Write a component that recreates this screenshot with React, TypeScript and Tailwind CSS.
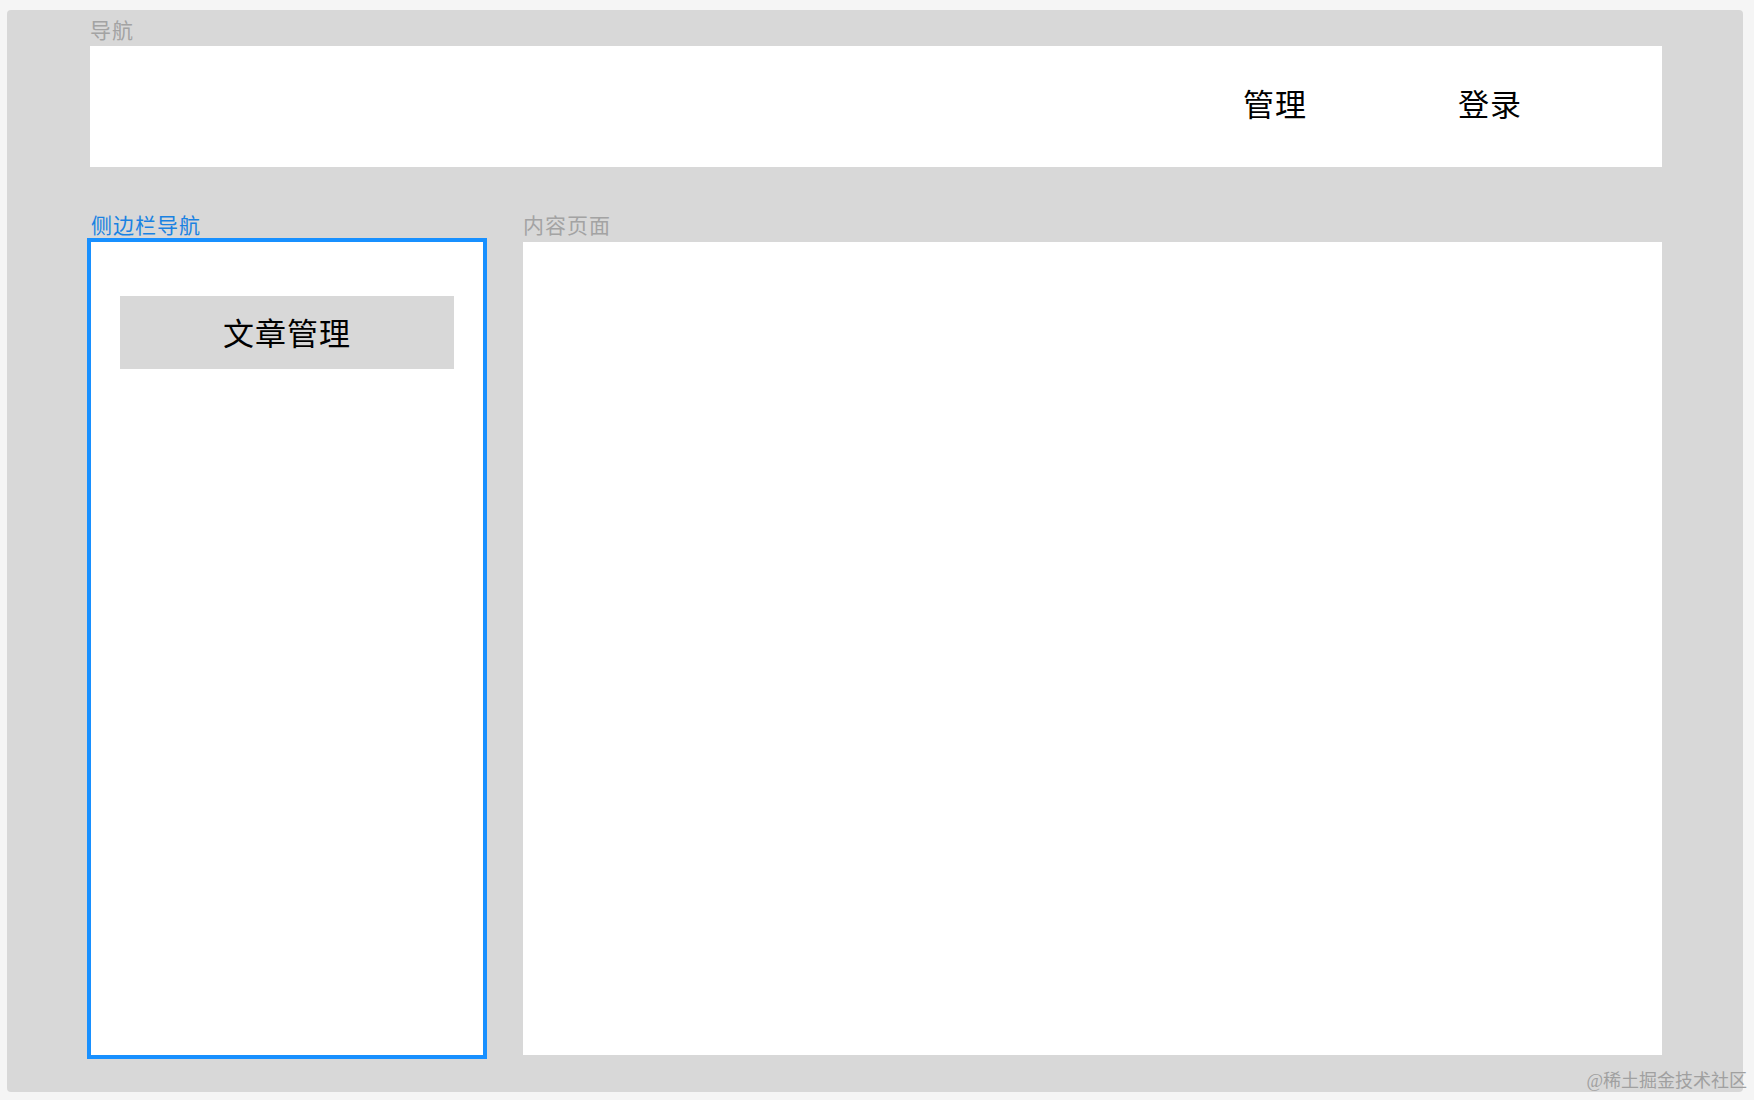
import React from "react";

export default function App() {
  return (
    <div
      className="relative w-[1754px] h-[1100px] bg-[#f5f5f5] pt-[10px] pl-[7px] pr-[11px] pb-[8px]"
      style={{ fontFamily: '"Noto Sans CJK SC", "Noto Sans", sans-serif' }}
    >
      <div className="w-full h-[1082px] bg-[#d8d8d8] rounded-[4px] pl-[83px] pr-[81px] pt-[6px] flex flex-col">
        <div className="h-[30px] leading-[26px] text-[21px] text-[#a3a3a3] tracking-[1px]">导航</div>
        <div className="h-[121px] bg-white flex items-center justify-end pr-[140px] pb-[6px] gap-[151px] text-[31px] text-black">
          <span className="tracking-[1px]">管理</span>
          <span className="tracking-[1px]">登录</span>
        </div>
        <div className="flex items-start">
          <div className="ml-[-3px] mt-[43px] flex flex-col">
            <div className="h-[28px] leading-[28px] pl-[4px] text-[21px] text-[#1a82e2] tracking-[1px]">侧边栏导航</div>
            <div className="w-[400px] h-[821px] border-[4px] border-[#1890ff] bg-white flex flex-col">
              <div className="mx-[29px] mt-[54px] h-[73px] bg-[#d8d8d8] flex items-center justify-center text-[31px] text-black tracking-[1px]">
                文章管理
              </div>
            </div>
          </div>
          <div className="ml-[36px] mt-[47px] flex-1 flex flex-col">
            <div className="h-[28px] leading-[20px] text-[21px] text-[#a3a3a3] tracking-[1px]">内容页面</div>
            <div className="h-[813px] bg-white"></div>
          </div>
        </div>
      </div>
      <div
        className="absolute right-[7px] top-[1069px] text-[18px] leading-[24px] text-[#a0a0a0]"
        style={{ fontFamily: '"Liberation Serif", "Noto Sans CJK SC", serif' }}
      >
        @稀土掘金技术社区
      </div>
    </div>
  );
}
